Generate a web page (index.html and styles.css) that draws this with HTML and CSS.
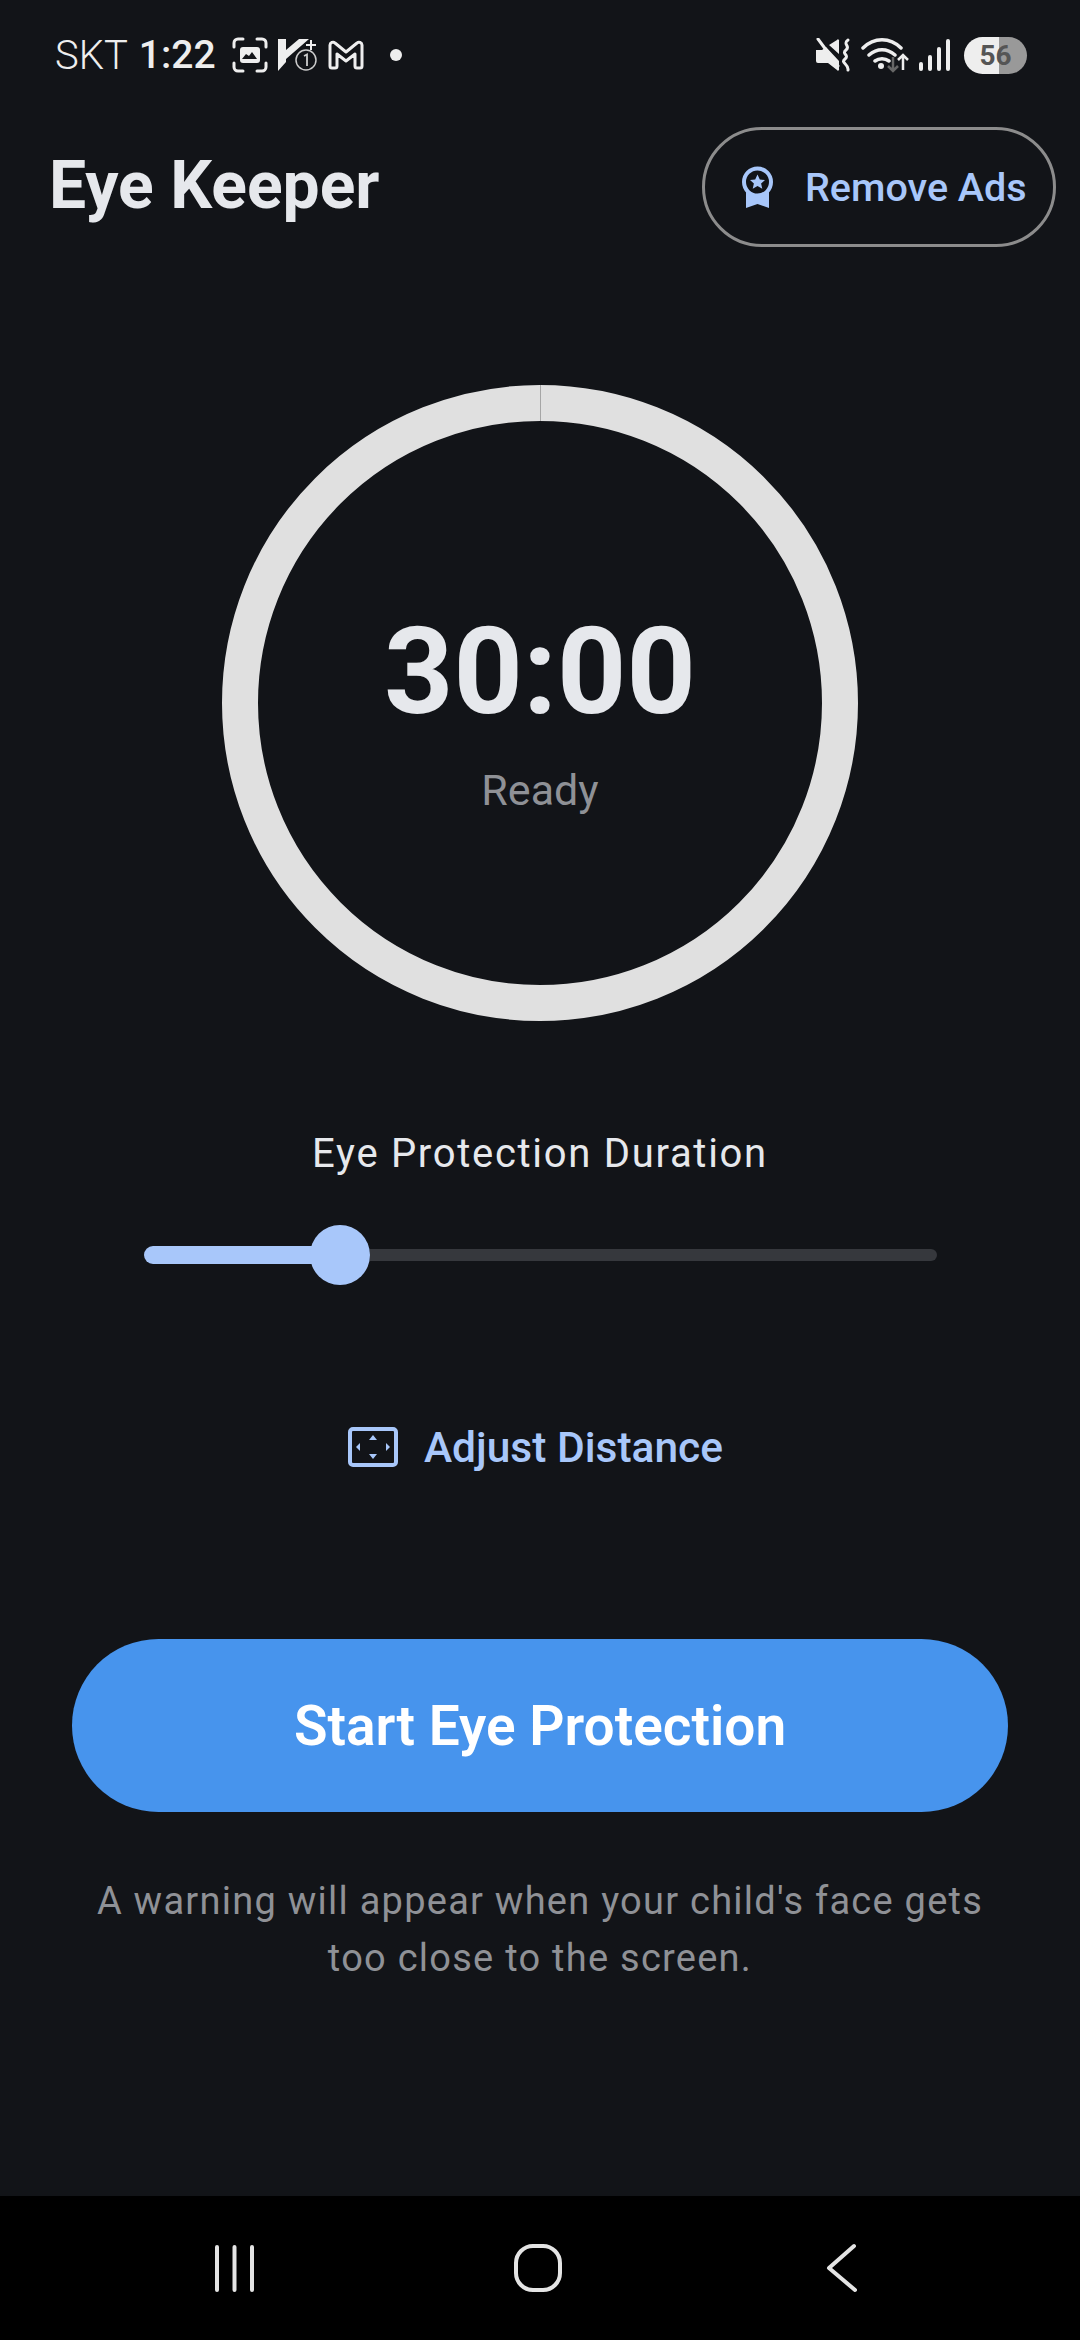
FILE: index.html
```html
<!DOCTYPE html>
<html lang="en">
<head>
    <meta charset="UTF-8">
    <meta name="viewport" content="width=device-width, initial-scale=1.0">
    <title>Eye Keeper</title>
    <link rel="stylesheet" href="styles.css">
</head>
<body>
    <div class="phone">
        <div class="status-bar">
            <div class="status-left">
                <span class="carrier">SKT</span>
                <span class="clock">1:22</span>
                <svg class="icon-scan" width="36" height="36" viewBox="0 0 36 36">
                    <path d="M2 10V6a4 4 0 0 1 4-4h5M25 2h5a4 4 0 0 1 4 4v4M34 26v4a4 4 0 0 1-4 4h-5M11 34H6a4 4 0 0 1-4-4v-4" fill="none" stroke="#eeeeee" stroke-width="3" stroke-linecap="round"/>
                    <rect x="8" y="10" width="20" height="16" rx="3" fill="#eeeeee"/>
                    <path d="M10 22l4-5 3 2 3-4 5 7z" fill="#121418"/>
                </svg>
                <svg class="icon-vo" width="42" height="34" viewBox="0 0 42 34">
                    <path d="M0 1h8v11L21 1h10L8 21v3l-8 9z" fill="#eeeeee"/>
                    <path d="M33 2v10M28 7h10" stroke="#eeeeee" stroke-width="2"/>
                    <circle cx="28" cy="22" r="10" fill="#121418" stroke="#cccccc" stroke-width="1.5"/>
                    <path d="M26 18l3-1.500V28" fill="none" stroke="#cccccc" stroke-width="1.800"/>
                </svg>
                <svg class="icon-mail" width="36" height="30" viewBox="0 0 36 30">
                    <path d="M2 5a3 3 0 0 1 5-2l11 9 11-9a3 3 0 0 1 5 2v21a2 2 0 0 1-2 2h-3a2 2 0 0 1-2-2V14l-9 7-9-7v12a2 2 0 0 1-2 2H4a2 2 0 0 1-2-2z" fill="none" stroke="#eeeeee" stroke-width="3" stroke-linejoin="round"/>
                </svg>
                <span class="dot"></span>
            </div>
            <div class="status-right">
                <svg class="icon-mute" width="36" height="34" viewBox="0 0 36 34">
                    <path d="M1 12h6l4-3 13 14v8a1 1 0 0 1-2 1l-9-7H3a2 2 0 0 1-2-2zM14 7l8-5a1 1 0 0 1 2 1v13z" fill="#eeeeee"/>
                    <path d="M3 1l20 27" stroke="#eeeeee" stroke-width="3" stroke-linecap="round"/>
                    <path d="M33 2c-6 4 3 6-2 10s4 5-1 9 4 5 3 11" fill="none" stroke="#eeeeee" stroke-width="3" stroke-linecap="round"/>
                </svg>
                <svg class="icon-wifi" width="48" height="36" viewBox="0 0 48 36">
                    <path d="M2 11c11-11 27-11 38 0M8 18c8-7 18-7 26 0M14 24c4-3 10-3 14 0" fill="none" stroke="#eeeeee" stroke-width="3.500" stroke-linecap="round"/>
                    <circle cx="20" cy="29" r="3" fill="#eeeeee"/>
                    <path d="M32 20v14M27 29l5 5 5-5" fill="none" stroke="#666666" stroke-width="2.500"/>
                    <path d="M42 33V18M37 23l5-5 5 5" fill="none" stroke="#eeeeee" stroke-width="2.500"/>
                </svg>
                <svg class="icon-signal" width="31" height="34" viewBox="0 0 31 34">
                    <g fill="#eeeeee">
                        <rect x="0" y="24" width="4" height="9" rx="2"/>
                        <rect x="9" y="17" width="4" height="16" rx="2"/>
                        <rect x="18" y="9" width="4" height="24" rx="2"/>
                        <rect x="27" y="1" width="4" height="32" rx="2"/>
                    </g>
                </svg>
                <span class="battery">56</span>
            </div>
        </div>

        <div class="header">
            <h1 class="title">Eye Keeper</h1>
            <a class="remove-ads">
                <svg class="icon-badge" width="33" height="42" viewBox="0 0 33 42">
                    <path d="M5 26v16l11.500-4 11.500 4V26z" fill="#a8c7fa"/>
                    <circle cx="16.500" cy="16" r="13.500" fill="#121418" stroke="#a8c7fa" stroke-width="4"/>
                    <path d="M16.500 8.500l2.300 5 5.200.5-3.900 3.500 1.200 5.300-4.800-2.800-4.800 2.800 1.200-5.300L9 14l5.200-.5z" fill="#a8c7fa"/>
                </svg>
                <span>Remove Ads</span>
            </a>
        </div>

        <div class="main">
            <div class="ring">
                <span class="ring-seam"></span>
                <div class="time">30:00</div>
                <div class="ring-status">Ready</div>
            </div>

            <div class="duration-label">Eye Protection Duration</div>
            <div class="slider">
                <div class="slider-fill"></div>
                <div class="slider-thumb"></div>
                <div class="slider-rest"></div>
            </div>

            <a class="adjust">
                <svg class="icon-adjust" width="50" height="40" viewBox="0 0 50 40">
                    <rect x="2" y="2" width="46" height="36" rx="3" fill="none" stroke="#a8c7fa" stroke-width="4"/>
                    <path d="M25 8l4 5h-8zM25 32l4-5h-8zM8 20l4-4v8zM42 20l-4-4v8z" fill="#a8c7fa"/>
                </svg>
                <span>Adjust Distance</span>
            </a>

            <button class="start-btn">Start Eye Protection</button>
            <p class="note">A warning will appear when your child's face gets<br>too close to the screen.</p>
        </div>

        <div class="nav-bar">
            <div class="nav-item">
                <svg width="41" height="47" viewBox="0 0 41 47">
                    <path d="M3 2v43M20.500 2v43M38 2v43" stroke="#e4e4e4" stroke-width="4" stroke-linecap="round"/>
                </svg>
            </div>
            <div class="nav-item">
                <svg width="50" height="50" viewBox="0 0 50 50">
                    <rect x="3" y="3" width="44" height="44" rx="17" fill="none" stroke="#e4e4e4" stroke-width="4"/>
                </svg>
            </div>
            <div class="nav-item">
                <svg width="31" height="50" viewBox="0 0 31 50">
                    <path d="M28 3L3 25l26 22" fill="none" stroke="#e4e4e4" stroke-width="4" stroke-linecap="round" stroke-linejoin="round"/>
                </svg>
            </div>
        </div>
    </div>
</body>
</html>
```

FILE: styles.css
```css
body {
    margin: 0;
    padding: 0;
    background-color: #121418;
    font-family: Roboto, 'Liberation Sans', sans-serif;
}
.phone {
    width: 1080px;
    height: 2340px;
    display: flex;
    flex-direction: column;
    overflow: hidden;
}

/* status bar */
.status-bar {
    height: 110px;
    padding: 0 53px 0 55px;
    display: flex;
    justify-content: space-between;
    align-items: center;
    color: #eeeeee;
}
.status-left,
.status-right {
    display: flex;
    align-items: center;
}
.carrier {
    font-size: 40px;
    font-weight: 300;
}
.clock {
    font-size: 39px;
    font-weight: 500;
    margin-left: 11px;
}
.icon-scan {
    margin-left: 16px;
}
.icon-vo {
    margin-left: 10px;
}
.icon-mail {
    margin-left: 8px;
}
.dot {
    width: 12px;
    height: 12px;
    border-radius: 50%;
    background-color: #eeeeee;
    margin-left: 26px;
}
.icon-wifi {
    margin-left: 10px;
}
.icon-signal {
    margin-left: 10px;
}
.battery {
    width: 63px;
    height: 37px;
    margin-left: 14px;
    border-radius: 19px;
    background: linear-gradient(to right, #eeeeee 0, #eeeeee 35px, #999999 35px);
    color: #555555;
    font-size: 28px;
    font-weight: 700;
    line-height: 37px;
    text-align: center;
}

/* header */
.header {
    margin-top: 17px;
    padding: 0 24px 0 49px;
    display: flex;
    justify-content: space-between;
    align-items: center;
}
.title {
    margin: -3px 0 0;
    font-size: 66px;
    font-weight: 700;
    color: #e6e8ec;
}
.remove-ads {
    box-sizing: border-box;
    width: 354px;
    height: 120px;
    padding-left: 36px;
    border: 3px solid #8c8c8c;
    border-radius: 60px;
    display: flex;
    align-items: center;
    color: #a8c7fa;
    font-size: 39.500px;
    font-weight: 500;
}
.remove-ads span {
    margin-left: 31px;
}

/* timer */
.main {
    flex: 1;
    display: flex;
    flex-direction: column;
    align-items: center;
}
.ring {
    box-sizing: border-box;
    position: relative;
    width: 636px;
    height: 636px;
    margin-top: 138px;
    border: 36px solid #e0e0e0;
    border-radius: 50%;
    display: flex;
    flex-direction: column;
    align-items: center;
}
.ring-seam {
    position: absolute;
    top: -36px;
    left: 281.500px;
    width: 1px;
    height: 36px;
    background-color: #a6a6a6;
}
.time {
    margin-top: 181px;
    font-size: 121px;
    line-height: 140px;
    font-weight: 700;
    color: #e6e8ec;
}
.ring-status {
    margin-top: 23px;
    font-size: 43px;
    line-height: 50px;
    color: #8f9196;
}

/* slider */
.duration-label {
    margin-top: 105px;
    font-size: 40px;
    line-height: 56px;
    letter-spacing: 1.700px;
    color: #e6e8ec;
}
.slider {
    width: 793px;
    height: 60px;
    margin-top: 43px;
    display: flex;
    align-items: center;
}
.slider-fill {
    width: 171px;
    height: 18px;
    border-radius: 9px 0 0 9px;
    background-color: #a8c7fa;
}
.slider-thumb {
    flex: none;
    width: 60px;
    height: 60px;
    margin-left: -5px;
    border-radius: 50%;
    background-color: #a8c7fa;
}
.slider-rest {
    flex: 1;
    height: 12px;
    border-radius: 0 6px 6px 0;
    background-color: #36383d;
}

.adjust {
    height: 60px;
    margin-top: 132px;
    padding-right: 9px;
    display: flex;
    align-items: center;
    color: #a8c7fa;
    font-size: 42.500px;
    font-weight: 500;
}
.adjust span {
    margin-left: 26px;
}

/* start button */
.start-btn {
    width: 936px;
    height: 173px;
    margin-top: 162px;
    border: none;
    border-radius: 87px;
    background-color: #4794ed;
    color: #ffffff;
    font-family: inherit;
    font-size: 55px;
    font-weight: 600;
}
.note {
    margin: 61px 0 0;
    font-size: 38px;
    line-height: 57px;
    letter-spacing: 1.250px;
    text-align: center;
    color: #8f9196;
}

/* system nav */
.nav-bar {
    height: 144px;
    padding: 0 87px 0 83px;
    background-color: #000000;
    display: grid;
    grid-template-columns: repeat(3, 1fr);
    align-items: center;
}
.nav-item {
    display: flex;
    justify-content: center;
}
```
